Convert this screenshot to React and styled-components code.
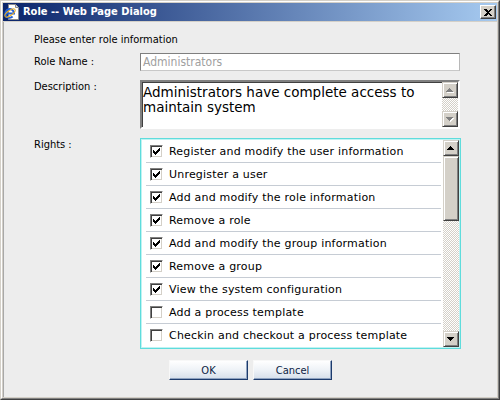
import React from "react";
import styled, { createGlobalStyle } from "styled-components";

const GlobalStyle = createGlobalStyle`
  html, body {
    margin: 0;
    padding: 0;
    background: #ffffff;
  }
  * {
    box-sizing: border-box;
  }
`;

const UI_FONT = `"DejaVu Sans Condensed", "DejaVu Sans", Verdana, sans-serif`;
const WIDE_FONT = `"DejaVu Sans", Verdana, sans-serif`;

const Window = styled.div`
  width: 500px;
  height: 400px;
  border: 1px solid;
  border-color: #d4d0c8 #404040 #404040 #d4d0c8;
  background: #d4d0c8;
`;

const Frame = styled.div`
  height: 100%;
  border: 1px solid;
  border-color: #ffffff #808080 #808080 #ffffff;
  padding: 1px;
  display: flex;
  flex-direction: column;
  gap: 1px;
`;

const TitleBar = styled.div`
  height: 18px;
  flex-shrink: 0;
  display: flex;
  align-items: center;
  padding: 0 1px 0 1px;
  background: linear-gradient(to right, #0a246a 0%, #a6caf0 100%);
`;

const TitleText = styled.span`
  flex: 1;
  margin-left: 3px;
  color: #ffffff;
  font: bold 11px ${UI_FONT};
  line-height: 14px;
  white-space: nowrap;
`;

const CloseButton = styled.span`
  width: 16px;
  height: 14px;
  display: flex;
  align-items: center;
  justify-content: center;
  background: #d4d0c8;
  border: 1px solid;
  border-color: #ffffff #404040 #404040 #ffffff;
  box-shadow: inset -1px -1px #808080;
`;

const Content = styled.div`
  flex: 1;
  background: #ededed;
  border-left: 1px solid #a8a8a8;
  padding-top: 11px;
  display: flex;
  flex-direction: column;
  font-family: ${UI_FONT};
  font-size: 11px;
  color: #000000;
`;

const FormArea = styled.div`
  padding-left: 30px;
  display: flex;
  flex-direction: column;
`;

const Intro = styled.div`
  line-height: 14px;
  margin-bottom: 6px;
`;

const FieldRow = styled.div`
  display: grid;
  grid-template-columns: 106px 320px;
  align-items: ${(p) => (p.$center ? "center" : "start")};
  margin-bottom: ${(p) => p.$gap || 0}px;
`;

const Label = styled.div`
  line-height: 14px;
`;

const TextInput = styled.div`
  height: 18px;
  border: 1px solid;
  border-color: #7f7f7f #b8b8b8 #c8c8c8 #7f7f7f;
  background: #ffffff;
  color: #a0a0a0;
  font-size: 12px;
  line-height: 16px;
  padding-left: 2px;
`;

const TextArea = styled.div`
  height: 49px;
  display: flex;
  border: 2px solid;
  border-color: #808080 #ffffff #ffffff #808080;
  box-shadow: inset 1px 1px #404040;
  background: #ffffff;
`;

const AreaText = styled.div`
  flex: 1;
  padding: 3px 0 0 1px;
  font-family: ${WIDE_FONT};
  font-size: 13.5px;
  line-height: 15px;
`;

const ScrollBar = styled.div`
  width: 16px;
  flex-shrink: 0;
  display: flex;
  flex-direction: column;
`;

const ScrollButton = styled.div`
  height: 16px;
  flex-shrink: 0;
  display: flex;
  align-items: center;
  justify-content: center;
  background: #d4d0c8;
  border: 1px solid;
  border-color: #d4d0c8 #404040 #404040 #d4d0c8;
  box-shadow: inset 1px 1px #ffffff, inset -1px -1px #808080;
`;

const Thumb = styled(ScrollButton)`
  height: ${(p) => p.$size}px;
`;

const Track = styled.div`
  flex: 1;
  background: repeating-conic-gradient(#d4d0c8 0% 25%, #ffffff 0% 50%) 0 0 / 2px 2px;
`;

const RightsBox = styled.div`
  height: 211px;
  width: 321px;
  border: 1px solid #5fdcdc;
`;

const RightsInner = styled.div`
  height: 100%;
  display: flex;
  border: 1px solid #bff3f3;
  background: #ffffff;
`;

const RightsList = styled.div`
  flex: 1;
  overflow: hidden;
  padding: 0 2px 0 4px;
`;

const RightRow = styled.div`
  height: 23px;
  display: flex;
  align-items: center;
  gap: 6px;
  padding-left: 4px;
  border-bottom: 1px solid #c6ccd4;
  font-family: ${WIDE_FONT};
  font-size: 11px;
  letter-spacing: 0.2px;
  white-space: nowrap;

  &:last-child {
    border-bottom: none;
  }
`;

const Box = styled.span`
  width: 13px;
  height: 13px;
  flex-shrink: 0;
  display: flex;
  align-items: center;
  justify-content: center;
  border: 1px solid;
  border-color: #808080 #ffffff #ffffff #808080;
  box-shadow: inset 1px 1px #404040, inset -1px -1px #d4d0c8;
  background: #ffffff;
`;

const ButtonBar = styled.div`
  display: flex;
  justify-content: center;
  gap: 5px;
  margin-top: 11px;
`;

const DialogButton = styled.button`
  width: 79px;
  height: 20px;
  padding: 0;
  border: 1px solid;
  border-color: #f8f8f8 #1c3a6c #1c3a6c #f8f8f8;
  box-shadow: inset -1px -1px #8ea2c0;
  background: linear-gradient(to bottom, #ffffff 0%, #eef2f7 50%, #d5deea 100%);
  color: #0c1c44;
  font-family: ${UI_FONT};
  font-size: 11px;
`;

function IeIcon() {
  return (
    <svg width="16" height="16" viewBox="0 0 16 16">
      <path d="M4.5 0.5 H11.5 L14.5 3.5 V15.5 H4.5 Z" fill="#ffffff" stroke="#8a8a8a" />
      <path d="M11.5 0.5 V3.5 H14.5" fill="#e0e0e0" stroke="#8a8a8a" />
      <path d="M1.5 9.5 H10 A4.3 4.3 0 1 0 8.6 12.6" fill="none" stroke="#1f5fd6" strokeWidth="2" />
      <ellipse cx="6" cy="9" rx="6" ry="2.4" transform="rotate(-35 6 9)" fill="none" stroke="#f0b020" strokeWidth="1" />
    </svg>
  );
}

function CloseGlyph() {
  return (
    <svg width="8" height="7" viewBox="0 0 8 7" shapeRendering="crispEdges">
      <path d="M0 0 H2 L4 2 L6 0 H8 L5 3.5 L8 7 H6 L4 5 L2 7 H0 L3 3.5 Z" fill="#000000" />
    </svg>
  );
}

function Arrow({ up, disabled }) {
  const pts = up ? "3.5,0 7,4 0,4" : "0,0 7,0 3.5,4";
  return (
    <svg width="8" height="5" viewBox="0 0 8 5" shapeRendering="crispEdges">
      {disabled && <polygon points={pts} fill="#ffffff" transform="translate(1 1)" />}
      <polygon points={pts} fill={disabled ? "#808080" : "#000000"} />
    </svg>
  );
}

function CheckBox({ checked }) {
  return (
    <Box>
      {checked && (
        <svg width="7" height="7" viewBox="0 0 7 7" shapeRendering="crispEdges">
          <polygon points="0,2 2,4 7,-1 7,2 2,7 0,5" fill="#000000" />
        </svg>
      )}
    </Box>
  );
}

const rights = [
  { label: "Register and modify the user information", checked: true },
  { label: "Unregister a user", checked: true },
  { label: "Add and modify the role information", checked: true },
  { label: "Remove a role", checked: true },
  { label: "Add and modify the group information", checked: true },
  { label: "Remove a group", checked: true },
  { label: "View the system configuration", checked: true },
  { label: "Add a process template", checked: false },
  { label: "Checkin and checkout a process template", checked: false },
];

export default function App() {
  return (
    <>
      <GlobalStyle />
      <Window>
        <Frame>
          <TitleBar>
            <IeIcon />
            <TitleText>Role -- Web Page Dialog</TitleText>
            <CloseButton>
              <CloseGlyph />
            </CloseButton>
          </TitleBar>
          <Content>
            <FormArea>
              <Intro>Please enter role information</Intro>
              <FieldRow $center $gap={9}>
                <Label>Role Name :</Label>
                <TextInput>Administrators</TextInput>
              </FieldRow>
              <FieldRow $gap={9}>
                <Label>Description :</Label>
                <TextArea>
                  <AreaText>Administrators have complete access to maintain system</AreaText>
                  <ScrollBar>
                    <ScrollButton>
                      <Arrow up disabled />
                    </ScrollButton>
                    <Track />
                    <ScrollButton>
                      <Arrow disabled />
                    </ScrollButton>
                  </ScrollBar>
                </TextArea>
              </FieldRow>
              <FieldRow>
                <Label>Rights :</Label>
                <RightsBox>
                  <RightsInner>
                    <RightsList>
                      {rights.map((r) => (
                        <RightRow key={r.label}>
                          <CheckBox checked={r.checked} />
                          {r.label}
                        </RightRow>
                      ))}
                    </RightsList>
                    <ScrollBar>
                      <ScrollButton>
                        <Arrow up />
                      </ScrollButton>
                      <Thumb $size={65} />
                      <Track />
                      <ScrollButton>
                        <Arrow />
                      </ScrollButton>
                    </ScrollBar>
                  </RightsInner>
                </RightsBox>
              </FieldRow>
            </FormArea>
            <ButtonBar>
              <DialogButton>OK</DialogButton>
              <DialogButton>Cancel</DialogButton>
            </ButtonBar>
          </Content>
        </Frame>
      </Window>
    </>
  );
}
